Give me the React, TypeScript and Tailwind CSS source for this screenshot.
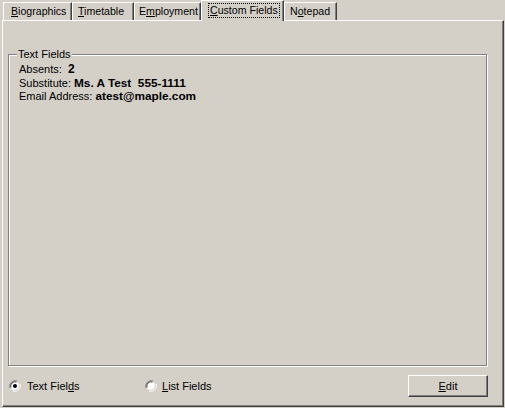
import type { ReactNode } from "react";

function Tab({
  children,
  width,
  pad,
  selected,
  first,
}: {
  children: ReactNode;
  width: string;
  pad: string;
  selected?: boolean;
  first?: boolean;
}) {
  if (selected) {
    return (
      <div
        className={`${width} ${pad} flex h-[21px] shrink-0 items-center whitespace-nowrap border-l border-t border-r border-l-white border-t-white border-r-[#404040] bg-[#d4d0c8] pb-[1px] shadow-[inset_-1px_0_0_#808080]`}
      >
        <span className="border border-dotted border-black px-[1px] leading-[13px]">
          {children}
        </span>
      </div>
    );
  }
  return (
    <div
      className={`${width} ${pad} ${first ? "ml-[3px]" : ""} mb-[1px] flex h-[18px] shrink-0 items-center whitespace-nowrap border-l border-t border-r border-l-white border-t-white border-r-[#404040] shadow-[inset_-1px_0_0_#808080]`}
    >
      {children}
    </div>
  );
}

function Radio({ checked }: { checked?: boolean }) {
  return (
    <svg width="12" height="12" viewBox="0 0 12 12" className="shrink-0">
      <path d="M1 8 A5.5 5.5 0 0 1 8 1" stroke="#808080" strokeWidth="1" fill="none" />
      <path d="M11 4 A5.5 5.5 0 0 1 4 11" stroke="#ffffff" strokeWidth="1" fill="none" />
      <circle cx="6" cy="6" r="4.5" fill="#ffffff" />
      <path d="M2 7.5 A4.3 4.3 0 0 1 7.5 2" stroke="#404040" strokeWidth="1" fill="none" />
      <path d="M10 4.5 A4.3 4.3 0 0 1 4.5 10" stroke="#d4d0c8" strokeWidth="1" fill="none" />
      {checked && <circle cx="6" cy="6" r="2" fill="#000000" />}
    </svg>
  );
}

export default function App() {
  return (
    <div className="h-[408px] w-[505px] overflow-hidden bg-[#d4d0c8] font-['Liberation_Sans',Arial,sans-serif] text-[11px] text-black">
      <div className="relative z-10 -mb-[1px] flex h-[21px] items-end text-[10.6px]">
        <Tab width="w-[69px]" pad="pl-[7px]" first>
          <span>
            <u>B</u>iographics
          </span>
        </Tab>
        <Tab width="w-[62px]" pad="pl-[5px]">
          <span>
            <u>T</u>imetable
          </span>
        </Tab>
        <Tab width="w-[67px]" pad="pl-[4px]">
          <span>
            E<u>m</u>ployment
          </span>
        </Tab>
        <Tab width="w-[83px]" pad="pl-[6px]" selected>
          <u>C</u>ustom Fields
        </Tab>
        <Tab width="w-[53px]" pad="pl-[5px]">
          <span>
            N<u>o</u>tepad
          </span>
        </Tab>
      </div>

      <div className="ml-[2px] h-[387px] w-[502px] border-t border-l border-r border-b border-t-white border-l-white border-r-[#404040] border-b-[#404040] shadow-[inset_-1px_-1px_0_#808080]">
        <div className="relative ml-[5px] mt-[33px] h-[312px] w-[479px] border border-[#808080] shadow-[inset_1px_1px_0_#ffffff,1px_1px_0_#ffffff]">
          <span className="absolute -top-[7px] left-[8px] bg-[#d4d0c8] px-[1px] leading-[13px]">
            Text Fields
          </span>
          <div className="flex flex-col pl-[10px] pt-[8px] leading-[13.5px]">
            <div>
              Absents:&nbsp; <b className="text-[12px]">2</b>
            </div>
            <div>
              Substitute: <b className="text-[11.8px]">Ms. A Test&nbsp; 555-1111</b>
            </div>
            <div>
              Email Address: <b className="text-[11.8px]">atest@maple.com</b>
            </div>
          </div>
        </div>

        <div className="ml-[5px] mt-[9px] flex h-[22px] w-[480px] items-center">
          <div className="flex w-[137px] items-center gap-[6px] pl-[1px]">
            <Radio checked />
            <span>
              Text Fiel<u>d</u>s
            </span>
          </div>
          <div className="flex items-center gap-[5px]">
            <Radio />
            <span>
              <u>L</u>ist Fields
            </span>
          </div>
          <button className="ml-auto flex h-[22px] w-[80px] items-center justify-center border border-t-white border-l-white border-r-[#404040] border-b-[#404040] bg-[#d4d0c8] shadow-[inset_-1px_-1px_0_#808080]">
            <span>
              <u>E</u>dit
            </span>
          </button>
        </div>
      </div>
    </div>
  );
}
